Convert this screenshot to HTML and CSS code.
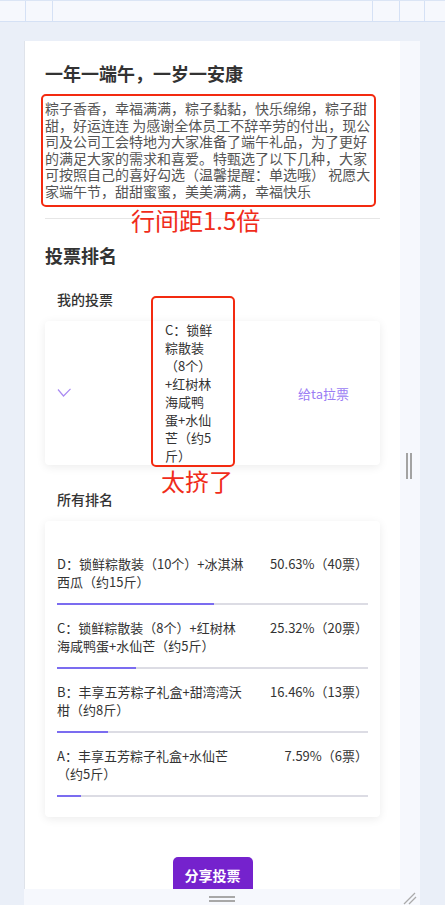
FILE: index.html
```html
<!DOCTYPE html>
<html lang="zh-CN">
<head>
    <meta charset="UTF-8">
    <meta name="viewport" content="width=device-width, initial-scale=1.0">
    <title>端午投票</title>
    <link rel="stylesheet" href="styles.css">
</head>
<body>

    <!-- Editor toolbar -->
    <div class="toolbar">
        <div class="tool-cell w26"></div>
        <div class="tool-cell w27"></div>
        <div class="tool-cell grow"></div>
        <div class="tool-cell w27"></div>
        <div class="tool-cell w25"></div>
        <div class="tool-cell last"></div>
    </div>

    <div class="workspace">
        <div class="device">
            <div class="device-body">
                <div class="screen">
                    <h1 class="page-title">一年一端午，一岁一安康</h1>
                    <p class="intro">粽子香香，幸福满满，粽子黏黏，快乐绵绵，粽子甜甜，好运连连 为感谢全体员工不辞辛劳的付出，现公司及公司工会特地为大家准备了端午礼品，为了更好的满足大家的需求和喜爱。特甄选了以下几种，大家可按照自己的喜好勾选（温馨提醒：单选哦） 祝愿大家端午节，甜甜蜜蜜，美美满满，幸福快乐</p>
                    <div class="divider"></div>

                    <h2 class="section-title">投票排名</h2>

                    <!-- My vote -->
                    <div class="sub-title">我的投票</div>
                    <div class="card my-vote">
                        <div class="vote-check">
                            <svg width="15" height="10" viewBox="0 0 15 10">
                                <polyline points="1,1.5 6.5,8 13.5,0.8" fill="none" stroke="#a98af2" stroke-width="1.2"/>
                            </svg>
                        </div>
                        <div class="vote-name">C：锁鲜粽散装（8个）+红树林海咸鸭蛋+水仙芒（约5斤）</div>
                        <div class="vote-action">给ta拉票</div>
                    </div>

                    <!-- All ranking -->
                    <div class="sub-title">所有排名</div>
                    <div class="card rank-list">
                        <div class="rank-row">
                            <div class="rank-info">
                                <div class="rank-name">D：锁鲜粽散装（10个）+冰淇淋西瓜（约15斤）</div>
                                <div class="rank-count">50.63%（40票）</div>
                            </div>
                            <div class="bar"><div class="bar-fill" style="width: 50.63%"></div></div>
                        </div>
                        <div class="rank-row">
                            <div class="rank-info">
                                <div class="rank-name">C：锁鲜粽散装（8个）+红树林海咸鸭蛋+水仙芒（约5斤）</div>
                                <div class="rank-count">25.32%（20票）</div>
                            </div>
                            <div class="bar"><div class="bar-fill" style="width: 25.32%"></div></div>
                        </div>
                        <div class="rank-row">
                            <div class="rank-info">
                                <div class="rank-name">B：丰享五芳粽子礼盒+甜湾湾沃柑（约8斤）</div>
                                <div class="rank-count">16.46%（13票）</div>
                            </div>
                            <div class="bar"><div class="bar-fill" style="width: 16.46%"></div></div>
                        </div>
                        <div class="rank-row">
                            <div class="rank-info">
                                <div class="rank-name">A：丰享五芳粽子礼盒+水仙芒（约5斤）</div>
                                <div class="rank-count">7.59%（6票）</div>
                            </div>
                            <div class="bar"><div class="bar-fill" style="width: 7.59%"></div></div>
                        </div>
                    </div>

                    <div class="share-wrap">
                        <button class="share-btn">分享投票</button>
                    </div>

                    <!-- Review annotations -->
                    <div class="mark mark-intro"></div>
                    <div class="mark-note note-intro">行间距1.5倍</div>
                    <div class="mark mark-vote"></div>
                    <div class="mark-note note-vote">太挤了</div>
                </div>

                <div class="scroll-track">
                    <div class="scroll-handle"></div>
                </div>
            </div>

            <div class="device-foot">
                <div class="foot-handle"></div>
                <svg class="resize-grip" width="14" height="14" viewBox="0 0 14 14">
                    <line x1="1" y1="13" x2="12" y2="2" stroke="#aaa" stroke-width="1.2"/>
                    <line x1="6" y1="13" x2="13" y2="6" stroke="#aaa" stroke-width="1.2"/>
                </svg>
            </div>
        </div>
    </div>

</body>
</html>
```

FILE: styles.css
```css
* {
    margin: 0;
    padding: 0;
    box-sizing: border-box;
}

body {
    font-family: "Noto Sans CJK SC", "Noto Sans", sans-serif;
    background-color: #eaeff8;
    height: 905px;
    overflow: hidden;
    color: #333;
}

/* Toolbar */
.toolbar {
    display: flex;
    height: 22px;
    background-color: #f6f8fd;
    border-top: 1px solid #dbe5f5;
    border-bottom: 1px solid #d5e1f5;
}

.tool-cell {
    border-right: 1px solid #d5e1f5;
}

.tool-cell.w26 { width: 26px; }
.tool-cell.w27 { width: 27px; }
.tool-cell.w25 { width: 25px; }
.tool-cell.grow { flex: 1; }
.tool-cell.last { width: 20px; border-right: none; }

/* Device frame */
.workspace {
    padding: 19px 0 0 24px;
}

.device {
    width: 396px;
    height: 864px;
    display: flex;
    flex-direction: column;
}

.device-body {
    flex: 1;
    display: flex;
    overflow: hidden;
}

.screen {
    position: relative;
    width: 376px;
    background-color: #fff;
    border-left: 1px solid #dfe3ea;
    padding: 20px 20px 0;
    overflow: hidden;
}

.scroll-track {
    width: 20px;
    background-color: #f6f8fd;
    position: relative;
}

.scroll-handle {
    position: absolute;
    left: 6px;
    top: 412px;
    width: 6px;
    height: 26px;
    border-left: 2px solid #a3a3a3;
    border-right: 2px solid #a3a3a3;
}

.device-foot {
    position: relative;
    height: 16px;
    background-color: #f6f8fd;
    display: flex;
    justify-content: center;
    padding-top: 7px;
}

.foot-handle {
    width: 26px;
    height: 6px;
    border-top: 2px solid #a8a8a8;
    border-bottom: 2px solid #a8a8a8;
}

.resize-grip {
    position: absolute;
    right: 3px;
    bottom: 0;
}

/* Page content */
.page-title {
    font-size: 18px;
    line-height: 24px;
    font-weight: bold;
    color: #333;
}

.intro {
    margin-top: 15px;
    font-size: 14px;
    line-height: 16.5px;
    color: #555;
}

.divider {
    margin-top: 19px;
    border-top: 1px solid #e6e6e6;
}

.section-title {
    margin-top: 24px;
    font-size: 18px;
    line-height: 24px;
    font-weight: bold;
    color: #333;
}

.sub-title {
    padding-left: 12px;
    margin-top: 22px;
    font-size: 14px;
    line-height: 20px;
    font-weight: 500;
    color: #333;
}

.card {
    margin-top: 12px;
    background-color: #fff;
    border-radius: 4px;
    box-shadow: 0 2px 10px rgba(0, 0, 0, 0.08);
}

.card + .sub-title {
    margin-top: 24px;
}

/* My vote */
.my-vote {
    display: flex;
    align-items: center;
    height: 144px;
    padding-left: 12px;
}

.vote-check {
    width: 108px;
    display: flex;
    align-items: center;
}

.vote-name {
    width: 50px;
    font-size: 13px;
    line-height: 18px;
    color: #333;
}

.vote-action {
    margin-left: auto;
    padding-right: 31px;
    font-size: 13px;
    color: #9a7cf4;
}

/* Ranking */
.rank-list {
    padding: 34px 12px 6px;
}

.rank-row {
    margin-bottom: 14px;
}

.rank-info {
    display: flex;
    justify-content: space-between;
    font-size: 13px;
    line-height: 18px;
    color: #333;
}

.rank-name {
    width: 190px;
}

.rank-count {
    text-align: right;
    white-space: nowrap;
}

.bar {
    margin-top: 12px;
    height: 2px;
    background-color: #dcdce4;
}

.bar-fill {
    height: 2px;
    background-color: #7b6cf0;
}

.share-wrap {
    margin-top: 40px;
    display: flex;
    justify-content: center;
}

.share-btn {
    width: 80px;
    height: 36px;
    border: none;
    border-radius: 5px;
    background-color: #7522cd;
    color: #fff;
    font-family: inherit;
    font-size: 14px;
    font-weight: bold;
    line-height: 36px;
    padding-bottom: 2px;
}

/* Review annotations */
.mark {
    position: absolute;
    border: 2px solid #f32a10;
    border-radius: 5px;
}

.mark-intro {
    left: 16px;
    top: 53px;
    width: 335px;
    height: 113px;
}

.mark-vote {
    left: 126px;
    top: 255px;
    width: 84px;
    height: 171px;
}

.mark-note {
    position: absolute;
    font-size: 24px;
    line-height: 24px;
    color: #f02c1a;
    white-space: nowrap;
}

.note-intro {
    left: 106px;
    top: 167px;
}

.note-vote {
    left: 136px;
    top: 428px;
}
```
